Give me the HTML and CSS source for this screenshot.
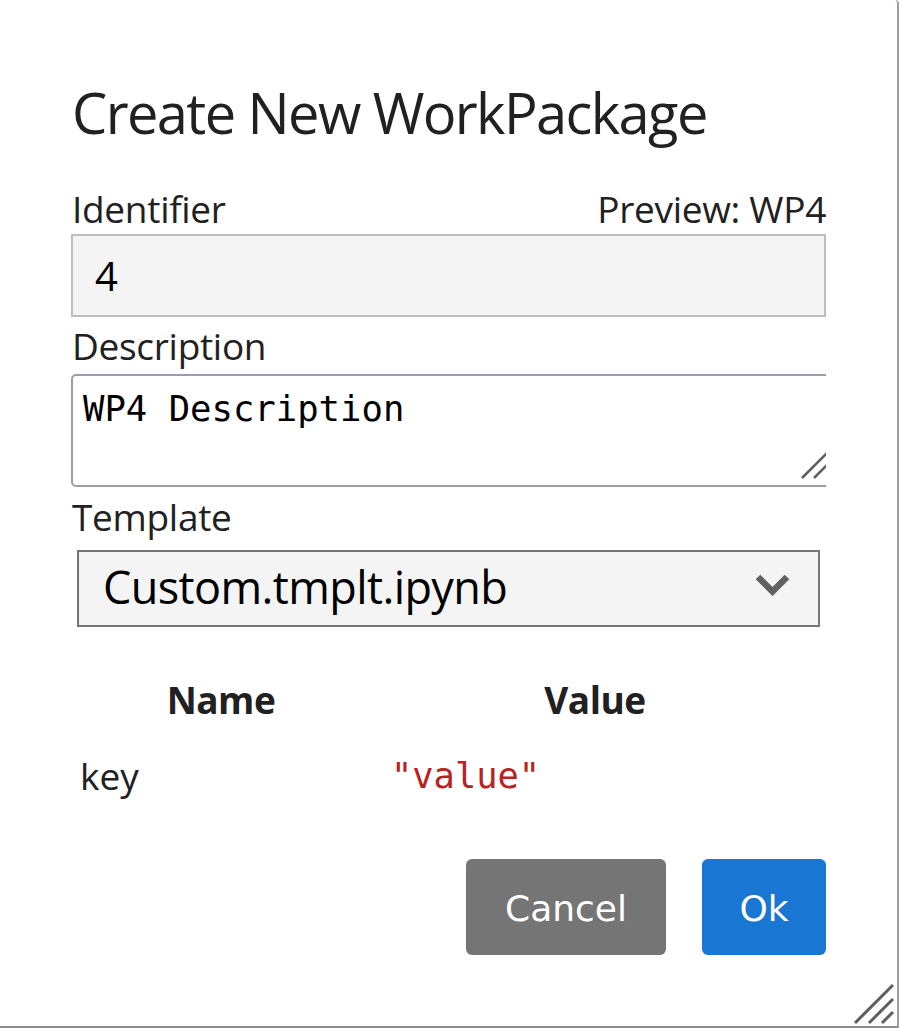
FILE: index.html
```html
<!DOCTYPE html>
<html lang="en">
<head>
<meta charset="utf-8">
<title>Create New WorkPackage</title>
<link rel="stylesheet" href="styles.css">
</head>
<body>
<div class="dialog">
  <h1 class="title">Create New WorkPackage</h1>

  <div class="field-head">
    <label class="label" for="ident">Identifier</label>
    <span class="preview">Preview: WP4</span>
  </div>
  <input id="ident" class="text-input" type="text" value="4">

  <label class="label desc-label" for="desc">Description</label>
  <div class="area-clip">
    <textarea id="desc" class="text-area">WP4 Description</textarea>
    <svg class="area-grip" width="28" height="28" viewBox="0 0 28 28"><path d="M1 27 L27 1 M13 27 L27 13" stroke="#5f5f5f" stroke-width="2.6" fill="none"/></svg>
  </div>

  <label class="label tmpl-label" for="tmpl">Template</label>
  <div class="select-wrap">
    <select id="tmpl" class="select">
      <option>Custom.tmplt.ipynb</option>
    </select>
    <svg class="chevron" width="36" height="24" viewBox="0 0 36 24"><polyline points="3,3 17.5,17.5 32,3" fill="none" stroke="#616161" stroke-width="6.5"/></svg>
  </div>

  <div class="params">
    <div class="th">Name</div>
    <div class="th">Value</div>
    <div class="td">key</div>
    <div class="td td-value">"value"</div>
  </div>

  <div class="actions">
    <button class="btn btn-cancel" type="button">Cancel</button>
    <button class="btn btn-ok" type="button">Ok</button>
  </div>

  <svg class="dialog-grip" width="44" height="44" viewBox="0 0 44 44"><path d="M4 42 L42 4 M18 42 L42 18 M31 42 L42 31" stroke="#5f5f5f" stroke-width="3" fill="none"/></svg>
</div>
</body>
</html>
```

FILE: styles.css
```css
html, body {
  margin: 0;
  padding: 0;
  background: #ffffff;
}

.dialog {
  position: relative;
  box-sizing: border-box;
  width: 899px;
  height: 1028px;
  padding: 72px 71px 0 71px;
  background: #ffffff;
  border-right: 2px solid #9e9e9e;
  border-bottom: 2px solid #8c8c8c;
  border-top-right-radius: 4px;
  font-family: "Open Sans", "Noto Sans", sans-serif;
  color: #212121;
}

.title {
  margin: 0 0 0 1px;
  font-size: 56px;
  font-weight: 400;
  line-height: 80px;
  letter-spacing: -1.6px;
  color: #212121;
}

.field-head {
  display: flex;
  justify-content: space-between;
  align-items: baseline;
  margin-top: 35px;
}

.label {
  display: block;
  font-size: 37px;
  line-height: 44px;
  margin-left: 1px;
  color: #212121;
  letter-spacing: -0.3px;
}

.preview {
  font-size: 37px;
  line-height: 44px;
  color: #212121;
  letter-spacing: -0.3px;
}

.text-input {
  display: block;
  box-sizing: border-box;
  width: 100%;
  height: 83px;
  margin: 3px 0 0 0;
  padding: 0 0 0 22px;
  border: 2px solid #bdbdbd;
  background: #f4f4f4;
  font-family: "Open Sans", "Noto Sans", sans-serif;
  font-size: 40px;
  color: #000000;
  outline: none;
}

.desc-label {
  margin-top: 7px;
}

.area-clip {
  position: relative;
  margin-top: 6px;
  height: 113px;
  overflow: hidden;
}

.text-area {
  display: block;
  box-sizing: border-box;
  width: calc(100% + 30px);
  height: 113px;
  margin: 0;
  padding: 11px 10px 0 10px;
  border: 2px solid #9d9daa;
  border-radius: 5px;
  background: #ffffff;
  font-family: "DejaVu Sans Mono", "Liberation Mono", monospace;
  font-size: 35.6px;
  line-height: 44px;
  color: #000000;
  resize: none;
  outline: none;
}

.area-grip {
  position: absolute;
  right: -3px;
  bottom: 8px;
}

.tmpl-label {
  margin-top: 8px;
}

.select-wrap {
  position: relative;
  margin: 11px 6px 0 6px;
}

.select {
  display: block;
  box-sizing: border-box;
  width: 100%;
  height: 77px;
  margin: 0;
  padding: 0 0 4px 24px;
  border: 2px solid #767676;
  border-radius: 0;
  background: #f4f4f4;
  -webkit-appearance: none;
  appearance: none;
  font-family: "Open Sans", "Noto Sans", sans-serif;
  font-size: 45px;
  letter-spacing: -0.6px;
  color: #000000;
  outline: none;
}

.chevron {
  position: absolute;
  right: 29px;
  top: 24px;
  pointer-events: none;
}

.params {
  display: grid;
  grid-template-columns: 298px 450px;
  margin-top: 48px;
  margin-left: 1px;
}

.th {
  text-align: center;
  font-size: 37px;
  font-weight: 700;
  line-height: 50px;
  color: #212121;
  letter-spacing: -0.5px;
}

.td {
  padding-top: 26px;
  font-size: 37px;
  line-height: 50px;
  color: #212121;
}

.td:nth-child(3) {
  padding-left: 8px;
}

.td-value {
  padding-left: 21px;
  font-family: "DejaVu Sans Mono", "Liberation Mono", monospace;
  font-size: 35.4px;
  color: #ba2121;
}

.actions {
  display: flex;
  justify-content: flex-end;
  gap: 36px;
  margin-top: 58px;
}

.btn {
  box-sizing: border-box;
  height: 96px;
  padding: 3px 0 0 0;
  border: none;
  border-radius: 6px;
  font-family: "DejaVu Sans", "Verdana", sans-serif;
  font-size: 36px;
  color: #ffffff;
}

.btn-cancel {
  width: 200px;
  background: #757575;
}

.btn-ok {
  width: 124px;
  background: #1976d2;
}

.dialog-grip {
  position: absolute;
  right: 2px;
  bottom: 1px;
}
```
